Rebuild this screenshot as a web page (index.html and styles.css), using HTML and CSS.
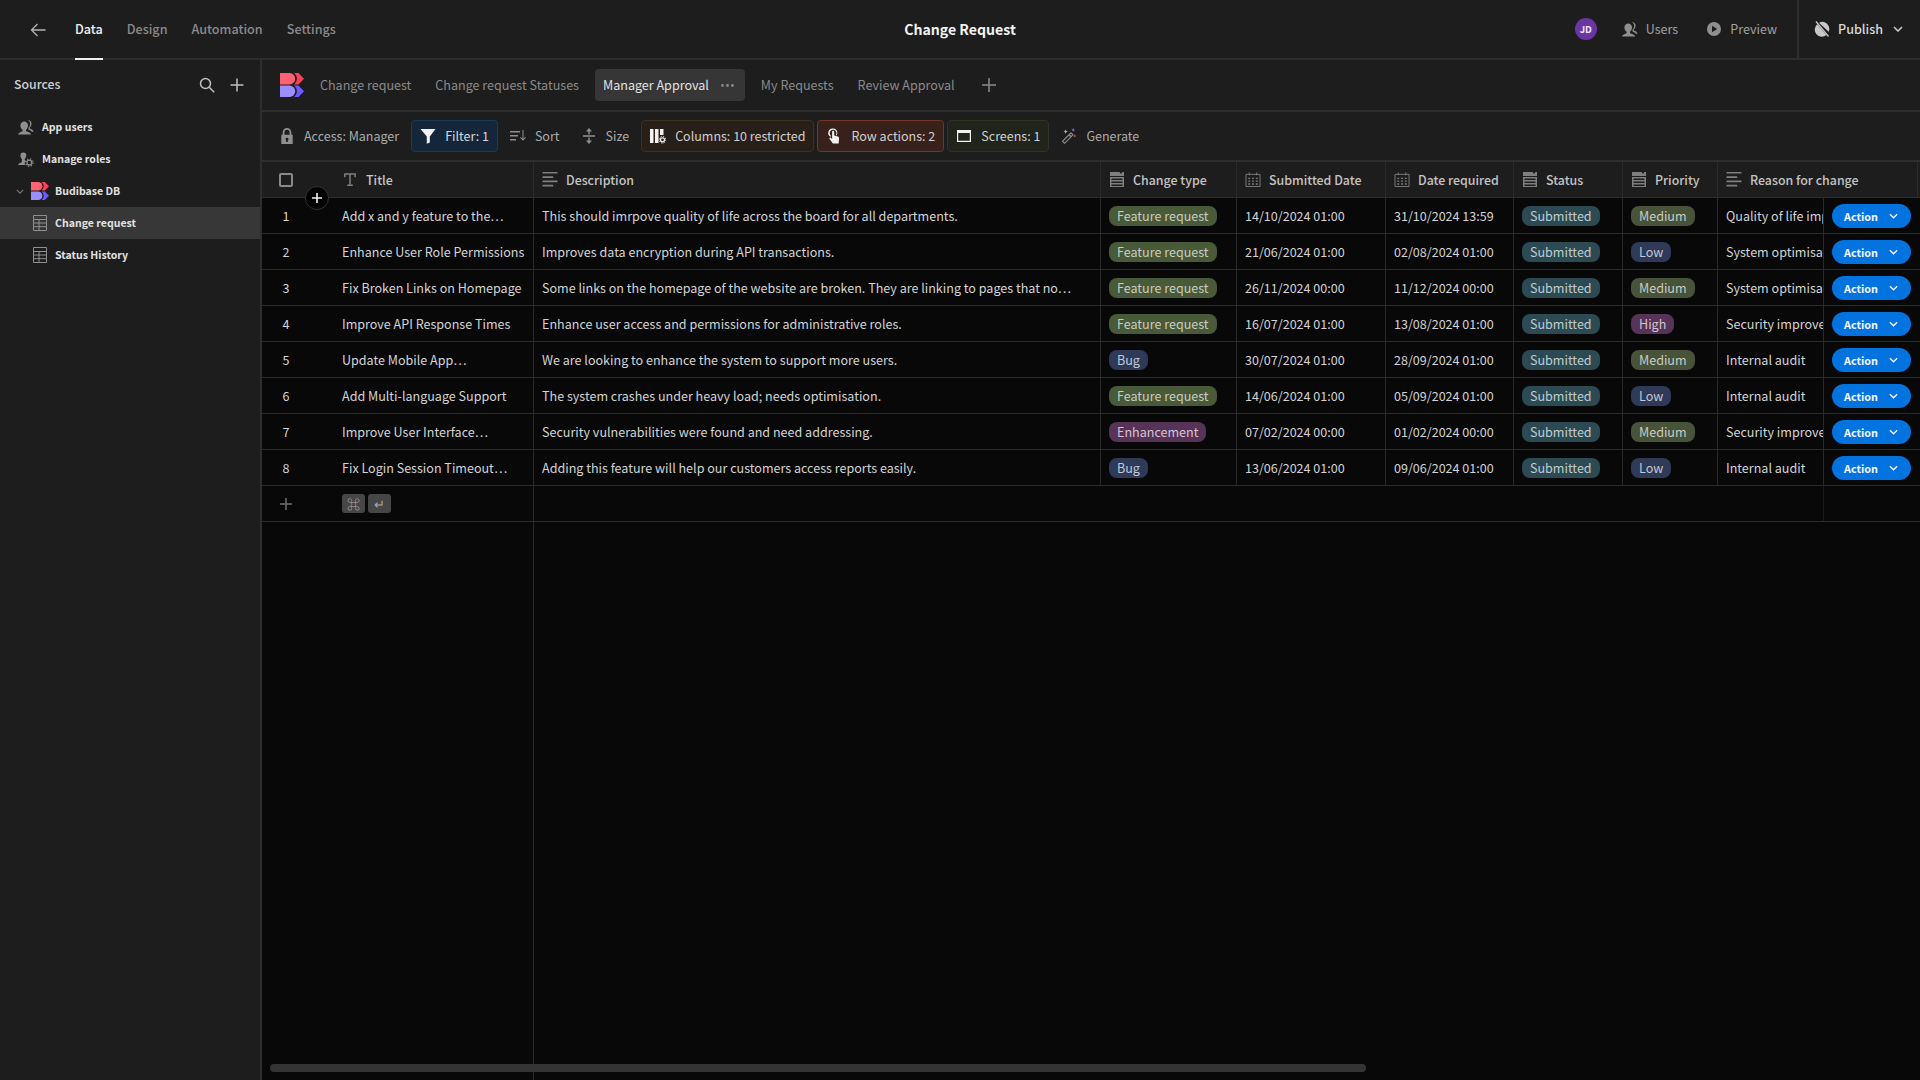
FILE: index.html
```html
<!DOCTYPE html>
<html lang="en">
<head>
<meta charset="utf-8">
<title>Change Request</title>
<link rel="stylesheet" href="styles.css">
</head>
<body>
<svg class="defs" aria-hidden="true">
  <symbol id="logo" viewBox="0 0 24 24">
    <path fill="#ff6273" d="M0 0h9.500a5.700 5.700 0 0 1 0 11.400H0z"/>
    <path fill="#ff3f56" d="M14 0h4.500L24 5.700l-5.500 5.700H14c1.800-1.500 2.900-3.500 2.900-5.700S15.800 1.500 14 0z"/>
    <path fill="#9a8fff" d="M0 12.600h9.500a5.700 5.700 0 0 1 0 11.400H0z"/>
    <path fill="#6b5bff" d="M14 12.600h4.500l5.500 5.700-5.500 5.700H14c1.800-1.500 2.900-3.500 2.900-5.700s-1.100-4.200-2.900-5.700z"/>
  </symbol>
  <symbol id="users" viewBox="1 1.500 16 15">
    <path d="M7.200 3a3.800 3.800 0 0 1 3.800 4c0 2-1 3.500-2 4.300v1.500c2.400.6 4.700 1.500 5.200 3.200H1c.4-1.700 3-2.600 4.600-3.200v-1.500C4.300 10.500 3.400 9 3.400 7a3.800 3.800 0 0 1 3.800-4z"/>
    <path d="M11 1.500a3.500 3.500 0 0 1 3.500 3.800c0 1.700-.8 3-1.700 3.800v1c1.600.5 3.400 1.300 3.700 3.200h-1.700c-.6-1-2-1.900-3.300-2.300V9.300c1-.9 1.600-2.200 1.600-4 0-1.200-.5-2.400-1.500-3.300z"/>
  </symbol>
  <symbol id="roles" viewBox="0 1 18 17">
    <path d="M6 1.500a3.300 3.300 0 0 1 3.300 3.500c0 1.700-.8 3-1.700 3.800v1.400l1 .3a5 5 0 0 0-.5 5.300H0c.3-1.700 2.600-2.600 4.300-3.200V8.800C3.400 8 2.700 6.700 2.700 5A3.300 3.300 0 0 1 6 1.500z"/>
    <circle cx="12.800" cy="13" r="2.800" fill="none" stroke="currentColor" stroke-width="1.500"/>
    <circle cx="12.800" cy="13" r="4.300" fill="none" stroke="currentColor" stroke-width="1.300" stroke-dasharray="1.500 1.900"/>
  </symbol>
  <symbol id="tbl" viewBox="0 0 14 16">
    <path fill="none" stroke="currentColor" d="M.5.500h13v15H.5zM.5 4.500h13M.5 8h13M.5 11.700h13M6 4.500v11"/>
  </symbol>
  <symbol id="select" viewBox="0 0 14 15">
    <path d="M0 0h9.500l1.500 2 1.500-2H14v4H0zM0 5h14v10H0zm1.500 1.500v1.500h11V6.500zm0 3v1.500h11V9.500zm0 3V14h11v-1.500z" fill-rule="evenodd"/>
  </symbol>
  <symbol id="cal" viewBox="0 0 16 16">
    <path fill="none" stroke="currentColor" d="M.5 2.500h15v13H.5zM4 .5v3M12 .5v3"/>
    <path d="M3 6h2v1.500H3zM7 6h2v1.500H7zM11 6h2v1.500h-2zM3 9h2v1.500H3zM7 9h2v1.500H7zM11 9h2v1.500h-2zM3 12h2v1.500H3zM7 12h2v1.500H7zM11 12h2v1.500h-2z"/>
  </symbol>
  <symbol id="lines" viewBox="0 0 14 14">
    <path d="M0 0h14v1.500H0zM0 4h10v1.500H0zM0 8h14v1.500H0zM0 12h10v1.500H0z"/>
  </symbol>
</svg>

<div class="app">
  <header class="topbar">
    <div class="top-left">
      <svg class="back" viewBox="0 0 16 14"><path d="M15.500 7H1.500M7.500 1l-6 6 6 6"/></svg>
      <nav class="nav">
        <span class="nav-item active">Data</span>
        <span class="nav-item">Design</span>
        <span class="nav-item">Automation</span>
        <span class="nav-item">Settings</span>
      </nav>
    </div>
    <h1 class="app-title">Change Request</h1>
    <div class="top-right">
      <span class="avatar">JD</span>
      <span class="top-link"><svg class="ico-users dim"><use href="#users"/></svg>Users</span>
      <span class="top-link"><svg class="ico16 dim" viewBox="0 0 16 16"><path fill-rule="evenodd" d="M8 1a7 7 0 1 1 0 14A7 7 0 0 1 8 1zM6 4.800v6.400L11.200 8z"/></svg>Preview</span>
      <span class="publish">
        <svg class="ico16 bright" viewBox="0 0 16 16"><path d="M3.200 3.300L12.400 14A7 7 0 0 1 3.200 3.300zM5 1.700A7 7 0 0 1 14.600 10.800z"/><path fill="none" stroke="currentColor" stroke-width="1.300" d="M2 .5l12.500 15"/></svg>
        <span class="publish-text">Publish</span>
        <svg class="chev" viewBox="0 0 10 6"><path d="M1 1l4 4 4-4"/></svg>
      </span>
    </div>
  </header>

  <div class="body">
    <aside class="sidebar">
      <div class="side-head">
        <span class="side-title">Sources</span>
        <svg class="side-action" viewBox="0 0 16 16"><circle cx="6.500" cy="6.500" r="5"/><path d="M10.200 10.200l5 5"/></svg>
        <svg class="side-action" viewBox="0 0 16 16"><path d="M8 1.500v13M1.500 8h13"/></svg>
      </div>
      <ul class="side-list">
        <li class="side-row lvl0"><svg class="ico-users dim"><use href="#users"/></svg>App users</li>
        <li class="side-row lvl0"><svg class="ico-users dim"><use href="#roles"/></svg>Manage roles</li>
        <li class="side-row lvl1">
          <svg class="tree-chev" viewBox="0 0 10 6"><path d="M1 1l4 4 4-4"/></svg>
          <svg class="side-logo"><use href="#logo"/></svg>Budibase DB
        </li>
        <li class="side-row lvl2 selected"><svg class="tbl dim"><use href="#tbl"/></svg>Change request</li>
        <li class="side-row lvl2"><svg class="tbl dim"><use href="#tbl"/></svg>Status History</li>
      </ul>
    </aside>

    <main class="main">
      <div class="tabs">
        <svg class="tabs-logo"><use href="#logo"/></svg>
        <span class="tab">Change request</span>
        <span class="tab">Change request Statuses</span>
        <span class="tab current">Manager Approval<svg class="dots" viewBox="0 0 13 3"><circle cx="1.500" cy="1.500" r="1.400"/><circle cx="6.500" cy="1.500" r="1.400"/><circle cx="11.500" cy="1.500" r="1.400"/></svg></span>
        <span class="tab">My Requests</span>
        <span class="tab">Review Approval</span>
        <svg class="tab-add" viewBox="0 0 14 14"><path d="M7 0v14M0 7h14"/></svg>
      </div>

      <div class="toolbar">
        <span class="chip"><svg class="ico16 dim" viewBox="3 1 10 14"><path fill-rule="evenodd" d="M8 1a3.800 3.800 0 0 1 3.800 3.800V7H13v8H3V7h1.200V4.800A3.800 3.800 0 0 1 8 1zm0 1.600a2.200 2.200 0 0 0-2.200 2.200V7h4.400V4.800A2.200 2.200 0 0 0 8 2.600zM8 9.500a1.300 1.300 0 0 0-.7 2.400V13.300h1.400v-1.400A1.300 1.300 0 0 0 8 9.500z"/></svg>Access: Manager</span>
        <span class="chip chip-filter"><svg class="ico16 white" viewBox="0 0 16 16"><path d="M.5 1h15L9.800 8.500v6l-3 1.300V8.500z"/></svg>Filter: 1</span>
        <span class="chip"><svg class="ico16 dim" viewBox="0 0 16 16"><path d="M0 3h10v1.400H0zM0 7h8v1.400H0zM0 11h6v1.400H0zM12.500 2h1v8.800l1.700-1.700.7.700-2.900 2.900-2.900-2.900.7-.7 1.700 1.700z"/></svg>Sort</span>
        <span class="chip"><svg class="ico16 dim" viewBox="0 0 16 16"><path d="M8 0l3 3.500H5zM2 7.200h12v1.600H2zM5 12.500h6L8 16zM7.300 3h1.400v3.500H7.300zM7.300 9.500h1.400V13H7.300z"/></svg>Size</span>
        <span class="chip chip-columns"><svg class="ico16 white" viewBox="0 0 16 16"><path d="M0 1h3.500v14H0zM5 1h3.500v14H5zM10 1h3.500v6H10z"/><circle cx="12.500" cy="11.800" r="2" fill="none" stroke="currentColor" stroke-width="1.200"/><circle cx="12.500" cy="11.800" r="3.300" fill="none" stroke="currentColor" stroke-width="1" stroke-dasharray="1.300 1.300"/></svg>Columns: 10 restricted</span>
        <span class="chip chip-actions"><svg class="ico16 white" viewBox="0 0 16 16"><path fill-rule="evenodd" d="M7 .5a4.500 4.500 0 0 1 3.600 7.200l-.6-1A3.300 3.300 0 0 0 7 1.700a3.300 3.300 0 0 0-2.300 5.700V9A4.500 4.500 0 0 1 7 .5z"/><path d="M6.100 3.500a1.100 1.100 0 0 1 2.100 0v4l3.600 1c.9.300 1.400 1 1.300 1.900l-.5 5.100H6.900L3.600 11c-.7-1 .4-2 1.300-1.200l1.200 1.100z"/></svg>Row actions: 2</span>
        <span class="chip chip-screens"><svg class="ico16 white" viewBox="0 0 16 16"><path fill-rule="evenodd" d="M1 2h14v12H1zm1.200 3v7.800h11.600V5z"/></svg>Screens: 1</span>
        <span class="chip"><svg class="ico16 dim" viewBox="0 0 16 16"><path fill="none" stroke="currentColor" stroke-width="1.100" d="M10 4.800L12 6.800 3.500 15.300 1.500 13.300z"/><path d="M8.700 6.200l2 2-1.100 1.100-2-2z"/><path fill="#e8b23c" d="M4.600 1.500l.7 1.500 1.500.6-1.500.6-.7 1.500-.6-1.500-1.500-.6 1.500-.6z"/><path fill="#7d74f0" d="M12.200 0l.6 1.400 1.400.6-1.400.6-.6 1.400-.6-1.400-1.400-.6 1.400-.6z"/><path fill="#e2584e" d="M13.800 6.200l.5 1.200 1.200.5-1.200.5-.5 1.200-.5-1.200-1.200-.5 1.200-.5z"/></svg>Generate</span>
      </div>

      <section class="grid">
        <div class="row head">
          <div class="cell gutter"><span class="check"></span></div>
          <div class="cell sep"><svg class="hico" viewBox="0 0 16 16"><path fill="none" stroke="currentColor" stroke-width="1.600" d="M2.500 5.500V2h11v3.500M8 2v12M5 14h6"/></svg>Title</div>
          <div class="cell sep"><svg class="hico"><use href="#lines"/></svg>Description</div>
          <div class="cell sep"><svg class="hico"><use href="#select"/></svg>Change type</div>
          <div class="cell sep"><svg class="hico"><use href="#cal"/></svg>Submitted Date</div>
          <div class="cell sep"><svg class="hico"><use href="#cal"/></svg>Date required</div>
          <div class="cell sep"><svg class="hico"><use href="#select"/></svg>Status</div>
          <div class="cell sep"><svg class="hico"><use href="#select"/></svg>Priority</div>
          <div class="cell sep wide"><svg class="hico"><use href="#lines"/></svg>Reason for change</div>
        </div>

        <div class="row">
          <div class="cell gutter">1</div><div class="cell sep">Add x and y feature to the…</div>
          <div class="cell sep">This should imrpove quality of life across the board for all departments.</div>
          <div class="cell sep"><span class="pill green">Feature request</span></div>
          <div class="cell sep">14/10/2024 01:00</div><div class="cell sep">31/10/2024 13:59</div>
          <div class="cell sep"><span class="pill teal">Submitted</span></div>
          <div class="cell sep"><span class="pill olive">Medium</span></div>
          <div class="cell sep">Quality of life improvements</div>
          <div class="cell action"><span class="btn">Action<svg class="btn-chev" viewBox="0 0 10 6"><path d="M1 1l4 4 4-4"/></svg></span></div>
        </div>
        <div class="row">
          <div class="cell gutter">2</div><div class="cell sep">Enhance User Role Permissions</div>
          <div class="cell sep">Improves data encryption during API transactions.</div>
          <div class="cell sep"><span class="pill green">Feature request</span></div>
          <div class="cell sep">21/06/2024 01:00</div><div class="cell sep">02/08/2024 01:00</div>
          <div class="cell sep"><span class="pill teal">Submitted</span></div>
          <div class="cell sep"><span class="pill navy">Low</span></div>
          <div class="cell sep">System optimisation</div>
          <div class="cell action"><span class="btn">Action<svg class="btn-chev" viewBox="0 0 10 6"><path d="M1 1l4 4 4-4"/></svg></span></div>
        </div>
        <div class="row">
          <div class="cell gutter">3</div><div class="cell sep">Fix Broken Links on Homepage</div>
          <div class="cell sep">Some links on the homepage of the website are broken. They are linking to pages that no…</div>
          <div class="cell sep"><span class="pill green">Feature request</span></div>
          <div class="cell sep">26/11/2024 00:00</div><div class="cell sep">11/12/2024 00:00</div>
          <div class="cell sep"><span class="pill teal">Submitted</span></div>
          <div class="cell sep"><span class="pill olive">Medium</span></div>
          <div class="cell sep">System optimisation</div>
          <div class="cell action"><span class="btn">Action<svg class="btn-chev" viewBox="0 0 10 6"><path d="M1 1l4 4 4-4"/></svg></span></div>
        </div>
        <div class="row">
          <div class="cell gutter">4</div><div class="cell sep">Improve API Response Times</div>
          <div class="cell sep">Enhance user access and permissions for administrative roles.</div>
          <div class="cell sep"><span class="pill green">Feature request</span></div>
          <div class="cell sep">16/07/2024 01:00</div><div class="cell sep">13/08/2024 01:00</div>
          <div class="cell sep"><span class="pill teal">Submitted</span></div>
          <div class="cell sep"><span class="pill plum">High</span></div>
          <div class="cell sep">Security improvement</div>
          <div class="cell action"><span class="btn">Action<svg class="btn-chev" viewBox="0 0 10 6"><path d="M1 1l4 4 4-4"/></svg></span></div>
        </div>
        <div class="row">
          <div class="cell gutter">5</div><div class="cell sep">Update Mobile App…</div>
          <div class="cell sep">We are looking to enhance the system to support more users.</div>
          <div class="cell sep"><span class="pill navy">Bug</span></div>
          <div class="cell sep">30/07/2024 01:00</div><div class="cell sep">28/09/2024 01:00</div>
          <div class="cell sep"><span class="pill teal">Submitted</span></div>
          <div class="cell sep"><span class="pill olive">Medium</span></div>
          <div class="cell sep">Internal audit</div>
          <div class="cell action"><span class="btn">Action<svg class="btn-chev" viewBox="0 0 10 6"><path d="M1 1l4 4 4-4"/></svg></span></div>
        </div>
        <div class="row">
          <div class="cell gutter">6</div><div class="cell sep">Add Multi-language Support</div>
          <div class="cell sep">The system crashes under heavy load; needs optimisation.</div>
          <div class="cell sep"><span class="pill green">Feature request</span></div>
          <div class="cell sep">14/06/2024 01:00</div><div class="cell sep">05/09/2024 01:00</div>
          <div class="cell sep"><span class="pill teal">Submitted</span></div>
          <div class="cell sep"><span class="pill navy">Low</span></div>
          <div class="cell sep">Internal audit</div>
          <div class="cell action"><span class="btn">Action<svg class="btn-chev" viewBox="0 0 10 6"><path d="M1 1l4 4 4-4"/></svg></span></div>
        </div>
        <div class="row">
          <div class="cell gutter">7</div><div class="cell sep">Improve User Interface…</div>
          <div class="cell sep">Security vulnerabilities were found and need addressing.</div>
          <div class="cell sep"><span class="pill plum">Enhancement</span></div>
          <div class="cell sep">07/02/2024 00:00</div><div class="cell sep">01/02/2024 00:00</div>
          <div class="cell sep"><span class="pill teal">Submitted</span></div>
          <div class="cell sep"><span class="pill olive">Medium</span></div>
          <div class="cell sep">Security improvement</div>
          <div class="cell action"><span class="btn">Action<svg class="btn-chev" viewBox="0 0 10 6"><path d="M1 1l4 4 4-4"/></svg></span></div>
        </div>
        <div class="row">
          <div class="cell gutter">8</div><div class="cell sep">Fix Login Session Timeout…</div>
          <div class="cell sep">Adding this feature will help our customers access reports easily.</div>
          <div class="cell sep"><span class="pill navy">Bug</span></div>
          <div class="cell sep">13/06/2024 01:00</div><div class="cell sep">09/06/2024 01:00</div>
          <div class="cell sep"><span class="pill teal">Submitted</span></div>
          <div class="cell sep"><span class="pill navy">Low</span></div>
          <div class="cell sep">Internal audit</div>
          <div class="cell action"><span class="btn">Action<svg class="btn-chev" viewBox="0 0 10 6"><path d="M1 1l4 4 4-4"/></svg></span></div>
        </div>

        <div class="row add-row">
          <div class="cell gutter"><svg class="add-plus" viewBox="0 0 14 14"><path d="M7 1v12M1 7h12"/></svg></div>
          <div class="cell sep"><span class="kbd">⌘</span><span class="kbd">↵</span></div>
          <div class="add-fill"></div>
          <div class="cell action"></div>
        </div>
        <div class="rest"></div>

        <span class="insert"><svg viewBox="0 0 12 12"><path d="M6 1v10M1 6h10"/></svg></span>
        <div class="scrollbar"></div>
      </section>
    </main>
  </div>
</div>
</body>
</html>
```

FILE: styles.css
```css
* { box-sizing: border-box; }
html, body { margin: 0; height: 100%; }
body {
  background: #1d1d1d;
  color: #d4d4d4;
  font-family: "Noto Sans CJK SC", "Noto Sans", sans-serif;
  font-size: 12.55px;
  line-height: 20px;
  overflow: hidden;
}
.defs { position: absolute; width: 0; height: 0; }
svg { display: block; flex: none; fill: currentColor; }
.ico16 { width: 16px; height: 16px; }
.ico-users { width: 16px; height: 15px; }
.dim { color: #8f8f8f; }
.white { color: #f2f2f2; }
.bright { color: #c8c8c8; }

.app { display: flex; flex-direction: column; height: 1080px; width: 1920px; }

/* top bar */
.topbar {
  height: 60px;
  flex: none;
  display: grid;
  grid-template-columns: 1fr auto 1fr;
  align-items: stretch;
  border-bottom: 2px solid #2e2e2e;
}
.top-left { display: flex; align-items: center; padding-left: 30px; }
.back { width: 16px; height: 14px; fill: none; stroke: #b4b4b4; stroke-width: 1.3; margin-right: 29px; margin-top: 1px; }
.nav { display: flex; gap: 24px; align-self: stretch; }
.nav-item { display: flex; align-items: center; color: #8a8a8a; font-weight: 500; font-size: 12.6px; border-bottom: 2px solid transparent; margin-bottom: -2px; }
.nav-item.active { color: #f0f0f0; border-bottom-color: #f0f0f0; }
.app-title { margin: 0; align-self: center; font-size: 14.1px; font-weight: 600; color: #f2f2f2; line-height: 20px; }
.top-right { display: flex; align-items: center; justify-content: flex-end; }
.avatar {
  width: 22px; height: 22px; border-radius: 50%;
  background: #6a35a0; color: #f0e8f8; font-size: 9.5px; font-weight: 700;
  display: flex; align-items: center; justify-content: center;
  margin-right: 25px;
}
.top-link { display: flex; align-items: center; gap: 8px; color: #a0a0a0; margin-right: 28px; }
.top-link:nth-child(3) { margin-right: 20px; }
.publish {
  display: flex; align-items: center; align-self: stretch;
  width: 123px; padding-left: 15px;
  border-left: 2px solid #2e2e2e;
  color: #d8d8d8;
  font-weight: 500;
}
.publish-text { margin-left: 8px; }
.chev { width: 10px; height: 6px; fill: none; stroke: #c8c8c8; stroke-width: 1.6; margin-left: 10px; }

/* layout */
.body { flex: 1; display: flex; min-height: 0; }
.sidebar { width: 262px; flex: none; border-right: 2px solid #2e2e2e; background: #1d1d1d; }
.main { flex: 1; display: flex; flex-direction: column; min-width: 0; }

/* sidebar */
.side-head { height: 50px; display: flex; align-items: center; padding: 0 15px 0 14px; gap: 14px; }
.side-title { flex: 1; color: #d0d0d0; font-weight: 500; font-size: 12.3px; margin-top: -2px; }
.side-action { width: 16px; height: 16px; fill: none; stroke: #c0c0c0; stroke-width: 1.5; }
.side-list { list-style: none; margin: 1px 0 0; padding: 0; }
.side-row { height: 32px; display: flex; align-items: center; font-size: 10.55px; font-weight: 600; color: #e2e2e2; }
.lvl0 { padding-left: 18px; gap: 8px; }
.lvl1 { padding-left: 16px; }
.lvl2 { padding-left: 33px; gap: 8px; }
.selected { background: #373737; }
.tree-chev { width: 8px; height: 5px; fill: none; stroke: #777; stroke-width: 1.4; margin-right: 7px; }
.side-logo { width: 18px; height: 18px; margin-right: 6px; }
.tbl { width: 14px; height: 16px; }

/* tabs */
.tabs {
  height: 52px; flex: none;
  display: flex; align-items: center; gap: 8px;
  padding: 0 0 0 18px;
  border-bottom: 2px solid #2e2e2e;
}
.tabs-logo { width: 24px; height: 24px; }
.tab { display: flex; align-items: center; height: 32px; padding: 0 8px; color: #8a8a8a; border-radius: 4px; white-space: nowrap; }
.tab.current { background: #363636; color: #e2e2e2; padding-right: 11px; }
.dots { width: 13px; height: 3px; color: #8a8a8a; margin-left: 12px; }
.tab-add { width: 14px; height: 14px; fill: none; stroke: #8a8a8a; stroke-width: 1.5; margin-left: 11px; }

/* toolbar */
.toolbar {
  height: 50px; flex: none;
  display: flex; align-items: center; gap: 3px;
  padding: 0 0 0 8px;
  border-bottom: 2px solid #2e2e2e;
}
.chip {
  display: flex; align-items: center; gap: 9px;
  height: 32px; padding: 0 8px;
  border: 1px solid transparent; border-radius: 4px;
  color: #ababab; white-space: nowrap;
  font-size: 12.5px;
}
.chip-filter { background: #14273a; border-color: #1d3a55; color: #d4d8dc; }
.chip-columns { background: #282018; border-color: #3c3222; color: #d0d0d0; }
.chip-actions { background: #38201b; border-color: #713628; color: #d0d0d0; }
.chip-screens { background: #20241a; border-color: #2f3423; color: #d0d0d0; }

/* grid */
.grid { flex: 1; position: relative; background: #080808; display: flex; flex-direction: column; min-height: 0; overflow: hidden; }
.row {
  height: 36px; flex: none;
  display: grid;
  grid-template-columns: 72px 200px 567px 136px 149px 128px 109px 95px 105px 97px;
  border-bottom: 1px solid #2a2a2a;
}
.row.head {
  background: #1d1d1d;
  grid-template-columns: 72px 200px 567px 136px 149px 128px 109px 95px 200px 2px;
  color: #c4c4c4;
  font-weight: 500;
  font-size: 12.4px;
  border-bottom-color: #2e2e2e;
}
.cell {
  display: flex; align-items: center; gap: 8px;
  padding: 0 8px;
  white-space: nowrap; overflow: hidden; min-width: 0;
}
.sep { border-right: 1px solid #2a2a2a; }
.row > .sep:nth-child(9) { border-right: 0; }
.row.head > .sep:nth-child(9) { border-right: 1px solid #2a2a2a; }
.gutter { padding: 0 24px 0 0; justify-content: center; }
.hico { width: 16px; height: 15px; color: #7f7f7f; }
.check { width: 14px; height: 14px; border: 2px solid #8a8a8a; border-radius: 2px; }
.pill { display: inline-block; height: 20px; line-height: 20px; padding: 0 8px; border-radius: 8px; color: #c8ccc4; }
.green { background: #485a38; }
.teal { background: #2b4a54; color: #c0ccd0; }
.olive { background: #48533a; }
.navy { background: #2e3a58; color: #c4c8d4; }
.plum { background: #573358; color: #d4c4d4; }
.action { padding: 0 8px; border-left: 1px solid #2a2a2a; }
.btn {
  display: flex; align-items: center;
  width: 79px; height: 24px;
  padding: 0 13px 0 12px;
  border-radius: 12px;
  background: #0373e0;
  color: #f2f7fd;
  font-size: 10.8px; font-weight: 600;
  justify-content: space-between;
}
.btn-chev { width: 9px; height: 6px; fill: none; stroke: #f2f7fd; stroke-width: 1.5; }
.add-row > .sep { gap: 3px; padding-left: 8px; }
.add-plus { width: 14px; height: 14px; fill: none; stroke: #6f6f6f; stroke-width: 1.5; }
.add-fill { grid-column: 3 / span 7; }
.add-row .action { border-left-color: #1a1a1a; }
.kbd {
  width: 23px; height: 19px; border-radius: 3px;
  background: #464646; color: #a8a8a8;
  font-size: 13px; line-height: 19px; text-align: center;
}
.rest { flex: 1; margin-left: 271px; border-left: 1px solid #2a2a2a; }

.insert {
  position: absolute; left: 43px; top: 24px;
  width: 24px; height: 24px; border-radius: 50%;
  background: #000; border: 1px solid #333;
  display: flex; align-items: center; justify-content: center;
}
.insert svg { width: 12px; height: 12px; fill: none; stroke: #f2f2f2; stroke-width: 1.6; }
.scrollbar {
  position: absolute; left: 8px; top: 902px;
  width: 1096px; height: 8px; border-radius: 4px;
  background: #343434;
}
```
